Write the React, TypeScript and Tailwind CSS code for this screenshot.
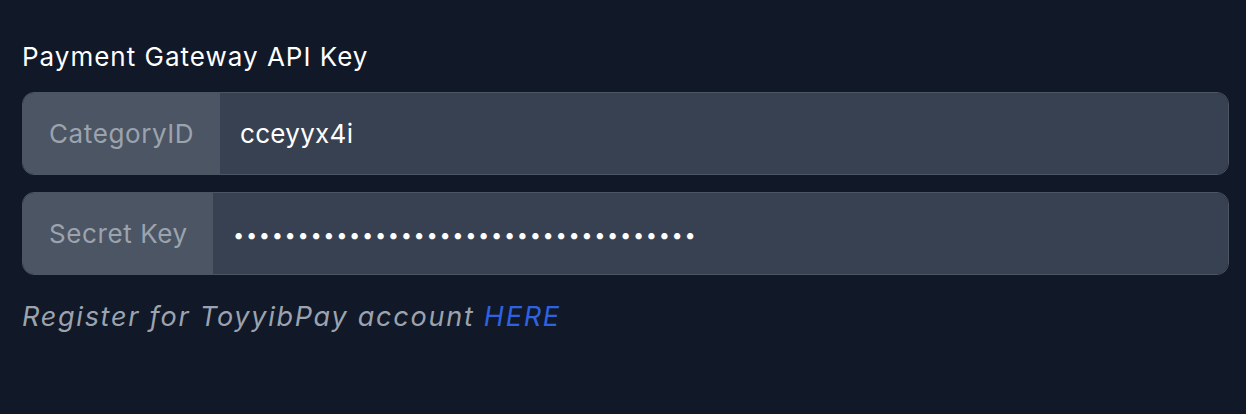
export default function App() {
  return (
    <div
      className="min-h-[414px] w-[1246px] bg-[#111827] pl-[22px] pt-[39px]"
      style={{ fontFamily: "Inter, 'Noto Sans', sans-serif" }}
    >
      {/* label */}
      <p className="mb-[17px] text-[26px] leading-[36px] tracking-[1px] text-white">
        Payment Gateway API Key
      </p>

      {/* category id */}
      <div className="flex h-[83px] w-[1207px] overflow-hidden rounded-[12px] border-[1.5px] border-[#4b5563]">
        <span className="flex w-[197px] items-center bg-[#4b5563] pl-[26px] text-[26px] tracking-[0.6px] text-[#9ca3af]">
          CategoryID
        </span>
        <input
          type="text"
          readOnly
          value="cceyyx4i"
          className="flex-1 bg-[#374151] pl-[20px] text-[26px] tracking-[0.3px] text-white outline-none"
        />
      </div>

      {/* secret key */}
      <div className="mt-[17px] flex h-[83px] w-[1207px] overflow-hidden rounded-[12px] border-[1.5px] border-[#4b5563]">
        <span className="flex w-[190px] items-center bg-[#4b5563] pl-[26px] text-[26px] tracking-[0.6px] text-[#9ca3af]">
          Secret Key
        </span>
        <input
          type="password"
          readOnly
          value="abcdefghijklmnopqrstuvwxyz0123456789"
          className="flex-1 bg-[#374151] pl-[20px] pt-[3px] text-[20px] tracking-[1.65px] text-white outline-none"
        />
      </div>

      {/* helper */}
      <p className="mt-[24px] text-[27px] leading-[36px] tracking-[1.75px] text-[#9ca3af] italic">
        Register for ToyyibPay account{" "}
        <a href="#" className="text-[#2f62e0]">
          HERE
        </a>
      </p>
    </div>
  );
}
